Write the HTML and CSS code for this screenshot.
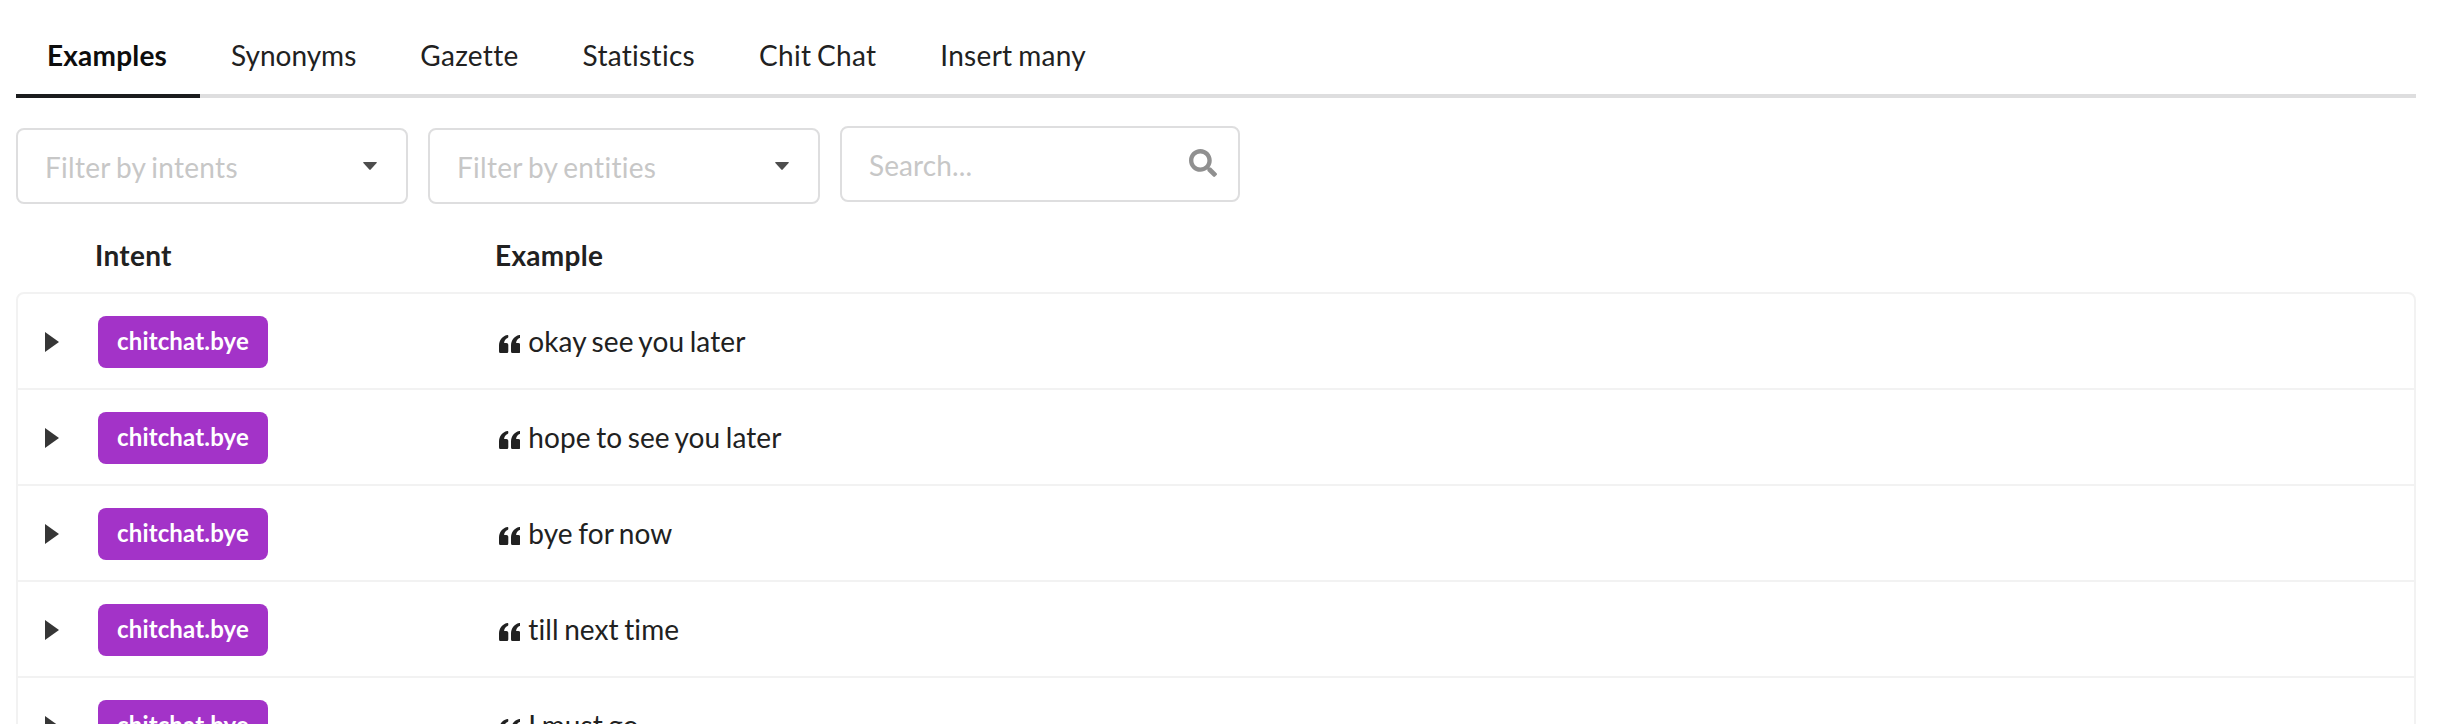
FILE: index.html
```html
<!DOCTYPE html>
<html lang="en">
<head>
<meta charset="utf-8">
<title>Training data</title>
<link rel="stylesheet" href="styles.css">
</head>
<body>
<svg class="defs" aria-hidden="true">
  <symbol id="quote" viewBox="0 0 21.300 18.500"><path id="mark" d="M8.200 0.100c.6-.2 1.100.1 1.100.7v1.300c0 .5-.3.700-.7.900C6.500 3.900 5.300 5.600 5.100 8h2.200c1.200 0 2 .8 2 2v6.300c0 1.300-.9 2.200-2.200 2.200H2.200C.9 18.500 0 17.600 0 16.300V11C0 5.200 3.200 1.300 8.200.1z"/><use href="#mark" x="12"/></symbol>
</svg>
<nav class="tabs">
  <a class="tab active">Examples</a>
  <a class="tab snug">Synonyms</a>
  <a class="tab">Gazette</a>
  <a class="tab">Statistics</a>
  <a class="tab">Chit Chat</a>
  <a class="tab">Insert many</a>
</nav>
<div class="filters">
  <div class="field dropdown"><span>Filter by intents</span><svg class="caret" viewBox="0 0 14 8"><path d="M.6 0h12.800q.7.300.2 1L7.700 7.600a1 1 0 0 1-1.400 0L.4 1Q-.1.300.6 0z"/></svg></div>
  <div class="field dropdown"><span>Filter by entities</span><svg class="caret" viewBox="0 0 14 8"><path d="M.6 0h12.800q.7.300.2 1L7.700 7.600a1 1 0 0 1-1.400 0L.4 1Q-.1.300.6 0z"/></svg></div>
  <div class="field search"><span>Search...</span><svg class="glass" viewBox="0 0 512 512"><path d="M505 442.700L405.300 343c-4.500-4.500-10.600-7-17-7H372c27.600-35.300 44-79.700 44-128C416 93.100 322.900 0 208 0S0 93.100 0 208s93.100 208 208 208c48.300 0 92.700-16.400 128-44v16.300c0 6.400 2.500 12.500 7 17l99.700 99.700c9.400 9.400 24.600 9.400 33.900 0l28.300-28.300c9.400-9.400 9.400-24.600.1-34zM208 336c-70.700 0-128-57.200-128-128 0-70.700 57.200-128 128-128 70.700 0 128 57.200 128 128 0 70.700-57.200 128-128 128z"/></svg></div>
</div>
<div class="head"><span>Intent</span><span>Example</span></div>
<div class="table">
  <div class="row"><i class="expander"></i><div class="intent"><span class="label">chitchat.bye</span></div><div class="example"><svg class="quote"><use href="#quote"/></svg><span>okay see you later</span></div></div>
  <div class="row"><i class="expander"></i><div class="intent"><span class="label">chitchat.bye</span></div><div class="example"><svg class="quote"><use href="#quote"/></svg><span>hope to see you later</span></div></div>
  <div class="row"><i class="expander"></i><div class="intent"><span class="label">chitchat.bye</span></div><div class="example"><svg class="quote"><use href="#quote"/></svg><span>bye for now</span></div></div>
  <div class="row"><i class="expander"></i><div class="intent"><span class="label">chitchat.bye</span></div><div class="example"><svg class="quote"><use href="#quote"/></svg><span>till next time</span></div></div>
  <div class="row"><i class="expander"></i><div class="intent"><span class="label">chitchat.bye</span></div><div class="example"><svg class="quote"><use href="#quote"/></svg><span>I must go</span></div></div>
</div>
</body>
</html>
```
FILE: styles.css
```css
* { box-sizing: border-box; }
body {
  margin: 0;
  height: 724px;
  padding: 16px 22px 0 16px;
  overflow: hidden;
  background: #fff;
  color: #212121;
  font: 28px/40px Lato, sans-serif;
  font-variant-ligatures: none;
  letter-spacing: 0.1px;
  word-spacing: -1.800px;
}
.defs { position: absolute; width: 0; height: 0; }
svg { display: block; flex: none; }
.tabs {
  display: flex;
  height: 82px;
  border-bottom: 4px solid #dededf;
}
.tab {
  height: 82px;
  padding: 19px 32px 0;
  border-bottom: 4px solid transparent;
  letter-spacing: 0.3px;
}
.tab.snug {
  padding-left: 31px;
  letter-spacing: 0;
}
.tab.active {
  width: 184px;
  padding: 19px 0 0 31px;
  color: #0d0d0d;
  font-weight: 700;
  letter-spacing: 0.2px;
  border-bottom-color: #1b1c1d;
}
.filters {
  display: flex;
  align-items: flex-start;
  gap: 20px;
  margin-top: 28px;
}
.field {
  display: flex;
  justify-content: space-between;
  height: 76px;
  width: 392px;
  padding: 17px 29px 0 27px;
  border: 2px solid #dededf;
  border-radius: 8px;
  color: #c7c7c7;
}
.dropdown {
  margin-top: 2px;
  letter-spacing: 0.3px;
}
.search { width: 400px; padding-right: 21px; }
.caret { width: 14px; height: 8px; margin-top: 15px; fill: #4d4d4d; }
.glass { width: 28px; height: 28px; margin-top: 4px; fill: #909090; }
.head {
  display: flex;
  height: 88px;
  padding: 31px 0 0 79px;
  font-weight: 700;
  letter-spacing: 0.3px;
}
.head span { width: 400px; }
.table {
  border: 2px solid #f2f2f2;
  border-radius: 8px 8px 0 0;
}
.row {
  display: flex;
  align-items: center;
  height: 96px;
  padding: 2px 0 0 27px;
  border-bottom: 2px solid #f2f2f2;
}
.expander {
  width: 14px;
  height: 20px;
  margin-right: 39px;
  background: #363636;
  clip-path: polygon(0 0, 100% 50%, 0 100%);
}
.intent { width: 401px; }
.label {
  display: block;
  width: 170px;
  height: 52px;
  padding: 13px 19px;
  border-radius: 8px;
  background: #a333c8;
  color: #fff;
  font-size: 24px;
  line-height: 24px;
  font-weight: 700;
  letter-spacing: 0.15px;
  white-space: nowrap;
}
.example { display: flex; align-items: center; }
.example span { margin-top: -2px; }
.quote { width: 21.300px; height: 18.500px; margin: 4px 8px 0 0; fill: #212121; }
```
